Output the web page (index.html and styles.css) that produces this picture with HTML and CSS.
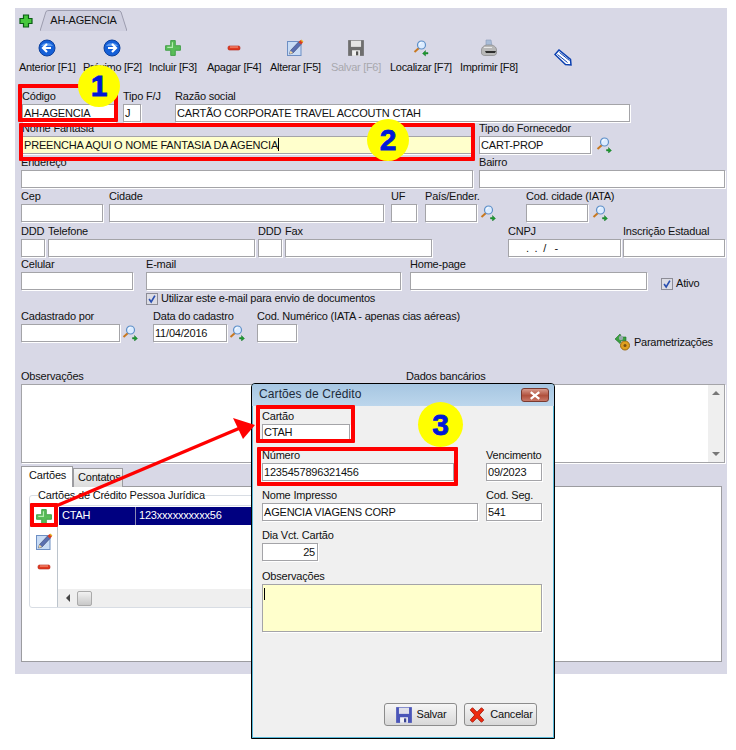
FILE: index.html
```html
<!DOCTYPE html>
<html lang="pt">
<head>
<meta charset="utf-8">
<title>Cadastro de Fornecedor</title>
<link rel="stylesheet" href="styles.css">
</head>
<body>
<svg class="defs" xmlns="http://www.w3.org/2000/svg">
  <symbol id="i-plus" viewBox="0 0 14 14">
    <path d="M5 .5h4v4.500h4.500v4H9v4.500H5V9H.5V5H5z" fill="#58bc58" stroke="#3f9e45" stroke-width=".8"/>
    <path d="M6.500 2v4.500H2" fill="none" stroke="#b4ecb0" stroke-width="1"/>
  </symbol>
  <symbol id="i-plus-bold" viewBox="0 0 14 14">
    <path d="M4.500 1h5v3.500h3.500v5H9.500V13h-5V9.500H1v-5h3.500z" fill="#46c83c" stroke="#0b5e16" stroke-width="1.200"/>
  </symbol>
  <symbol id="i-minus" viewBox="0 0 14 6">
    <rect x="1" y="1" width="12" height="4" rx="1.500" fill="#e03a20" stroke="#b32010" stroke-width=".6"/>
    <path d="M3 2h8" stroke="#f7a78e"/>
  </symbol>
  <symbol id="i-left" viewBox="0 0 18 18">
    <circle cx="9" cy="9" r="8" fill="#1560d8" stroke="#0c3f9c"/>
    <path d="M3 7a7 6 0 0 1 12 0" fill="#5f9cf0"/>
    <path d="M9 5L5 9l4 4M5.500 9H13" fill="none" stroke="#fff" stroke-width="2.200"/>
  </symbol>
  <symbol id="i-right" viewBox="0 0 18 18">
    <circle cx="9" cy="9" r="8" fill="#1560d8" stroke="#0c3f9c"/>
    <path d="M3 7a7 6 0 0 1 12 0" fill="#5f9cf0"/>
    <path d="M9 5l4 4-4 4M12.500 9H5" fill="none" stroke="#fff" stroke-width="2.200"/>
  </symbol>
  <symbol id="i-edit" viewBox="0 0 18 18">
    <rect x="1.500" y="2.500" width="13.500" height="14" fill="#c9dcf5" stroke="#6d8fc4"/>
    <path d="M3.500 15l1-3.500 8-8.500 2.500 2.500-8 8.500z" fill="#5a6fb0" stroke="#34406f" stroke-width=".6"/>
    <path d="M12.500 3L14.500 1l2.500 2.500-2 2z" fill="#d83a20"/>
    <path d="M15 1l2 2" stroke="#e8b020" stroke-width="1.200"/>
    <path d="M3.500 15l1-3.500 2.500 2.500z" fill="#f0d8a0"/>
  </symbol>
  <symbol id="i-disk-gray" viewBox="0 0 16 16">
    <path d="M1 1h14v14H1z" fill="#6e6e6e"/>
    <rect x="3.500" y="1.500" width="9" height="5.500" fill="#e4e4e4"/>
    <rect x="4.500" y="10" width="7" height="5" fill="#f0f0f0"/>
    <rect x="8" y="11" width="2" height="3.500" fill="#555"/>
  </symbol>
  <symbol id="i-disk-blue" viewBox="0 0 16 16">
    <path d="M1 1h14v14H1z" fill="#4a55b8"/>
    <rect x="3.500" y="1.500" width="9" height="5.500" fill="#dfe0ea"/>
    <rect x="4.500" y="10" width="7" height="5" fill="#f0f0f4"/>
    <rect x="8" y="11" width="2" height="3.500" fill="#3a448f"/>
  </symbol>
  <symbol id="i-lens" viewBox="0 0 16 16">
    <path d="M1.500 12L6 8" stroke="#c87820" stroke-width="2"/>
    <circle cx="8.500" cy="5" r="4" fill="#dcecff" stroke="#5f90c8" stroke-width="1.200"/>
    <path d="M6.500 4.500a2 2 0 0 1 2-2" stroke="#fff" fill="none"/>
    <path d="M10.500 12.500h2v-2l3 3-3 2.500v-2h-2z" fill="#1c9a30" stroke="#0d6a1c" stroke-width=".4"/>
  </symbol>
  <symbol id="i-find" viewBox="0 0 16 16">
    <path d="M1.500 12L6 8" stroke="#c87820" stroke-width="2"/>
    <circle cx="8.500" cy="5" r="4" fill="#dcecff" stroke="#5f90c8" stroke-width="1.200"/>
    <path d="M6.500 4.500a2 2 0 0 1 2-2" stroke="#fff" fill="none"/>
    <path d="M15 12.500h-2.500v-2l-3 3 3 2.500v-2H15z" fill="#1c9a30" stroke="#0d6a1c" stroke-width=".4"/>
  </symbol>
  <symbol id="i-print" viewBox="0 0 18 18">
    <path d="M6 1h5l1 6H6z" fill="#a9bdd8" stroke="#8a9cb8" stroke-width=".6"/>
    <path d="M1.500 11c0-3 3-5 6-5h3c3 0 6 2 6 5v3c0 1.500-1.500 2.500-3 2.500H4.500c-1.500 0-3-1-3-2.500z" fill="#b8b8b8" stroke="#7a7a7a" stroke-width=".6"/>
    <path d="M5 12h11l-1 2H6z" fill="#2e2e2e"/>
    <path d="M4 8.500h8" stroke="#e8e8e8"/>
  </symbol>
  <symbol id="i-clip" viewBox="0 0 18 18">
    <path d="M1 5.500L5 1l11.500 9.500.5 5.500-5.500-.5z" fill="#fff" stroke="#0a3fb0" stroke-width="1.500"/>
    <path d="M3.500 5.500l10 8M5.500 3.500l10 8" stroke="#0a3fb0" stroke-width="1"/>
  </symbol>
  <symbol id="i-gears" viewBox="0 0 18 18">
    <circle cx="11" cy="12.500" r="4.500" fill="#e0a020" stroke="#9a6a10"/>
    <circle cx="11" cy="12.500" r="1.500" fill="#7a5010"/>
    <path d="M1 6l5-5 1.500 3H12v3.500H7.500L6 10.500z" fill="#3aa040" stroke="#1e6e28" stroke-width=".6"/>
    <circle cx="7" cy="5" r="2.200" fill="#9aa8b0"/>
  </symbol>
  <symbol id="i-x" viewBox="0 0 16 16">
    <path d="M2 3.500L4 1.500l4 4 4-4 2 2-4 4.500 4 4.500-2 2-4-4-4 4-2-2 4-4.500z" fill="#ee2a10" stroke="#a81808" stroke-width=".8"/>
  </symbol>
  <symbol id="i-check" viewBox="0 0 12 12">
    <path d="M2.500 6l2.500 3.500L9.500 2" fill="none" stroke="#2a4fb0" stroke-width="2"/>
  </symbol>
</svg>

<main class="panel">
  <header class="tabstrip">
    <svg class="add-tab"><use href="#i-plus-bold"/></svg>
    <div class="doc-tab">
      <svg class="doc-tab-shape" viewBox="0 0 87 21" preserveAspectRatio="none"><path d="M0 21L6 1.500Q7 .500 9 .500H78Q80 .500 81 2L87 21" fill="#cfcfdf" stroke="#9c9cae"/></svg>
      <span class="doc-tab-label">AH-AGENCIA</span>
    </div>
  </header>

  <nav class="toolbar">
    <div class="tool"><svg class="ic18"><use href="#i-left"/></svg><span>Anterior [F1]</span></div>
    <div class="tool"><svg class="ic18"><use href="#i-right"/></svg><span>Próximo [F2]</span></div>
    <div class="tool"><svg class="ic16"><use href="#i-plus"/></svg><span>Incluir [F3]</span></div>
    <div class="tool"><svg class="ic-minus"><use href="#i-minus"/></svg><span>Apagar [F4]</span></div>
    <div class="tool"><svg class="ic18"><use href="#i-edit"/></svg><span>Alterar [F5]</span></div>
    <div class="tool tool-off"><svg class="ic18"><use href="#i-disk-gray"/></svg><span>Salvar [F6]</span></div>
    <div class="tool"><svg class="ic16"><use href="#i-find"/></svg><span>Localizar [F7]</span></div>
    <div class="tool"><svg class="ic18"><use href="#i-print"/></svg><span>Imprimir [F8]</span></div>
    <svg class="clip"><use href="#i-clip"/></svg>
  </nav>

  <section class="form">
    <div class="row">
      <div class="field w-codigo"><label>Código</label><div class="input">AH-AGENCIA</div></div>
      <div class="field w-tipo"><label>Tipo F/J</label><div class="input">J</div></div>
      <div class="field w-razao"><label>Razão social</label><div class="input">CARTÃO CORPORATE TRAVEL ACCOUTN CTAH</div></div>
    </div>
    <div class="row">
      <div class="field w-fantasia"><label>Nome Fantasia</label><div class="input input-yellow">PREENCHA AQUI O NOME FANTASIA DA AGENCIA<i class="caret"></i></div></div>
      <div class="field w-fornec"><label>Tipo do Fornecedor</label><div class="input">CART-PROP</div></div>
      <svg class="lens"><use href="#i-lens"/></svg>
    </div>
    <div class="row">
      <div class="field w-endereco"><label>Endereço</label><div class="input"></div></div>
      <div class="field w-bairro"><label>Bairro</label><div class="input"></div></div>
    </div>
    <div class="row">
      <div class="field w-cep"><label>Cep</label><div class="input"></div></div>
      <div class="field w-cidade"><label>Cidade</label><div class="input"></div></div>
      <div class="field w-uf"><label>UF</label><div class="input"></div></div>
      <div class="field w-pais"><label>País/Ender.</label><div class="input"></div></div>
      <svg class="lens lens-pais"><use href="#i-lens"/></svg>
      <div class="field w-codcid"><label>Cod. cidade (IATA)</label><div class="input"></div></div>
      <svg class="lens"><use href="#i-lens"/></svg>
    </div>
    <div class="row">
      <div class="field w-ddd"><label>DDD</label><div class="input"></div></div>
      <div class="field w-fone"><label>Telefone</label><div class="input"></div></div>
      <div class="field w-ddd2"><label>DDD</label><div class="input"></div></div>
      <div class="field w-fax"><label>Fax</label><div class="input"></div></div>
      <div class="field w-cnpj"><label>CNPJ</label><div class="input input-mask">. &nbsp;. &nbsp;/ &nbsp; -</div></div>
      <div class="field w-ie"><label>Inscrição Estadual</label><div class="input"></div></div>
    </div>
    <div class="row">
      <div class="field w-celular"><label>Celular</label><div class="input"></div></div>
      <div class="field w-email"><label>E-mail</label><div class="input"></div></div>
      <div class="field w-home"><label>Home-page</label><div class="input"></div></div>
      <div class="check check-ativo"><span class="box"><svg class="tick"><use href="#i-check"/></svg></span>Ativo</div>
    </div>
    <div class="row row-check">
      <div class="check"><span class="box"><svg class="tick"><use href="#i-check"/></svg></span>Utilizar este e-mail para envio de documentos</div>
    </div>
    <div class="row row-cad">
      <div class="field w-cadpor"><label>Cadastrado por</label><div class="input"></div></div>
      <svg class="lens lens-cad"><use href="#i-lens"/></svg>
      <div class="field w-data"><label>Data do cadastro</label><div class="input">11/04/2016</div></div>
      <svg class="lens lens-data"><use href="#i-lens"/></svg>
      <div class="field w-codnum"><label>Cod. Numérico (IATA - apenas cias aéreas)</label><div class="input"></div></div>
      <div class="param"><svg class="ic18"><use href="#i-gears"/></svg>Parametrizações</div>
    </div>
    <div class="row row-memo">
      <div class="field w-obs"><label>Observações</label><div class="input memo"></div></div>
      <div class="field w-banco"><label>Dados bancários</label>
        <div class="input memo memo-scroll"><div class="vscroll"><b class="up"></b><b class="down"></b></div></div>
      </div>
    </div>
  </section>

  <section class="tabs">
    <div class="tab-heads">
      <div class="tab tab-on">Cartões</div>
      <div class="tab">Contatos</div>
    </div>
    <div class="tab-page">
      <fieldset class="group">
        <legend>Cartões de Crédito Pessoa Jurídica</legend>
        <div class="side">
          <svg class="ic16"><use href="#i-plus"/></svg>
          <svg class="ic18 side-edit"><use href="#i-edit"/></svg>
          <svg class="ic-minus side-minus"><use href="#i-minus"/></svg>
        </div>
        <div class="grid">
          <div class="grid-row"><span class="cell-a">CTAH</span><span>123xxxxxxxxxx56</span></div>
          <div class="hscroll"><b class="left"></b><b class="thumb"></b></div>
        </div>
      </fieldset>
    </div>
  </section>
</main>

<aside class="dialog">
  <div class="titlebar"><span>Cartões de Crédito</span><span class="close"><svg class="close-x" viewBox="0 0 14 10"><path d="M2 1l10 8M12 1L2 9" stroke="#fff" stroke-width="2.600"/></svg></span></div>
  <div class="dlg-body">
    <div class="dlg-row dlg-r1"><div class="field d-cartao"><label>Cartão</label><div class="input d-h16">CTAH</div></div></div>
    <div class="dlg-row dlg-r2">
      <div class="field d-numero"><label>Número</label><div class="input">1235457896321456</div></div>
      <div class="field d-venc"><label>Vencimento</label><div class="input">09/2023</div></div>
    </div>
    <div class="dlg-row dlg-r3">
      <div class="field d-nome"><label>Nome Impresso</label><div class="input">AGENCIA VIAGENS CORP</div></div>
      <div class="field d-seg"><label>Cod. Seg.</label><div class="input">541</div></div>
    </div>
    <div class="dlg-row dlg-r4"><div class="field d-dia"><label>Dia Vct. Cartão</label><div class="input input-right">25</div></div></div>
    <div class="dlg-row dlg-r5"><div class="field d-obs"><label>Observações</label><div class="input input-yellow d-memo"><i class="caret caret-tall"></i></div></div></div>
    <div class="dlg-buttons">
      <div class="btn"><svg class="ic18"><use href="#i-disk-blue"/></svg>Salvar</div>
      <div class="btn"><svg class="ic18"><use href="#i-x"/></svg>Cancelar</div>
    </div>
  </div>
</aside>

<div class="mark mark-codigo"></div>
<div class="mark mark-fantasia"></div>
<div class="mark mark-plus"></div>
<div class="mark mark-cartao"></div>
<div class="mark mark-numero"></div>
<div class="badge badge-1">1</div>
<div class="badge badge-2">2</div>
<div class="badge badge-3">3</div>
<svg class="arrow" viewBox="0 0 736 750"><path d="M56 506L240 428" stroke="#f00" stroke-width="3.500"/><path d="M255 425L233 418L243 439z" fill="#f00"/></svg>
</body>
</html>
```

FILE: styles.css
```css
* { box-sizing: border-box; }

html, body { margin: 0; background: #fff; }

body {
  position: relative;
  width: 736px;
  height: 750px;
  overflow: hidden;
  font: 11px/13px "Liberation Sans", Arial, sans-serif;
  letter-spacing: -.2px;
  color: #111;
}

.defs { display: none; }

svg { display: block; flex: none; }

.panel {
  margin: 8px 0 0 15px;
  width: 712px;
  height: 666px;
  background: #d8d8e6;
  padding: 0 0 0 6px;
  display: flex;
  flex-direction: column;
}

.tabstrip { display: flex; height: 23px; padding-top: 2px; flex: none; }

.add-tab { width: 14px; height: 14px; margin: 4px 0 0 -2px; }

.doc-tab {
  position: relative;
  width: 87px;
  height: 21px;
  margin-left: 7px;
  display: flex;
  align-items: center;
  justify-content: center;
}

.doc-tab-shape { position: absolute; inset: 0; width: 100%; height: 100%; }

.doc-tab-label { position: relative; }

.toolbar {
  margin: 7px 0 0 -2px;
  height: 38px;
  display: grid;
  grid-template-columns: 64px 66px 58px 63px 61px 59px 70px 94px auto;
  justify-items: start;
  letter-spacing: -.3px;
  flex: none;
}

.tool { display: inline-flex; flex-direction: column; align-items: center; white-space: nowrap; }

.tool svg { height: 20px; }

.tool span { margin-top: 3px; }

.tool-off { color: #a8a8ae; }

.ic18 { width: 18px; height: 18px; }

.ic16 { width: 16px; height: 16px; }

.ic-minus { width: 14px; height: 6px; }

.clip { width: 18px; height: 18px; margin-top: 11px; }

.form {
  margin-top: 14px;
  display: grid;
  grid-template-rows: 32px 34px 34px 35px 33px 29px 23px 60px 94px;
  height: 374px;
  flex: none;
}

.row { display: flex; align-items: flex-start; }

.field { display: flex; flex-direction: column; flex: none; }

.field label { height: 14px; white-space: nowrap; }

.input {
  height: 18px;
  border: 1px solid #a4a4a8;
  box-shadow: 1px 1px 0 #fff;
  background: #fff;
  padding: 1px 1px 0 1px;
  white-space: nowrap;
  overflow: hidden;
  line-height: 15px;
}

.input-yellow { background: #ffffcc; }

.input-right { text-align: right; padding-right: 2px; }

.input-mask { padding-left: 17px; }

.caret { display: inline-block; width: 1px; height: 13px; background: #000; vertical-align: -2px; }

.caret-tall { display: block; height: 12px; margin-top: 2px; }

.w-codigo { width: 93px; margin-left: 1px; margin-right: 8px; }
.w-tipo { width: 18px; margin-right: 34px; }
.w-razao { width: 455px; }
.w-fantasia { width: 451px; margin-left: 1px; margin-right: 6px; }
.w-fornec { width: 112px; margin-right: 5px; }
.w-endereco { width: 452px; margin-right: 6px; }
.w-bairro { width: 246px; }
.w-cep { width: 82px; margin-right: 6px; }
.w-cidade { width: 275px; margin-right: 7px; }
.w-uf { width: 26px; margin-right: 8px; }
.w-pais { width: 52px; margin-right: 3px; }
.w-codcid { width: 62px; margin-right: 4px; }
.w-ddd { width: 24px; margin-right: 3px; }
.w-fone { width: 207px; margin-right: 3px; }
.w-ddd2 { width: 24px; margin-right: 3px; }
.w-fax { width: 147px; margin-right: 76px; }
.w-cnpj { width: 113px; margin-right: 2px; }
.w-ie { width: 102px; }
.w-celular { width: 112px; margin-right: 13px; }
.w-email { width: 255px; margin-right: 9px; }
.w-home { width: 237px; margin-right: 14px; }
.w-cadpor { width: 99px; margin-right: 2px; }
.w-data { width: 74px; margin-right: 2px; }
.w-codnum { width: 40px; }
.w-obs { width: 385px; }
.w-banco { width: 319px; }

.lens { width: 16px; height: 16px; margin-top: 15px; }
.lens-pais { margin-right: 30px; }
.lens-cad { margin-right: 15px; }
.lens-data { margin-right: 12px; }

.check { display: flex; align-items: center; gap: 3px; white-space: nowrap; }

.box {
  width: 12px;
  height: 12px;
  border: 1px solid #8c8c96;
  background: #dcdce4;
  display: block;
}

.tick { width: 10px; height: 10px; }

.check-ativo { margin-top: 19px; }

.row-check { padding-left: 125px; padding-top: 5px; }

.param { display: flex; align-items: center; gap: 2px; margin: 23px 0 0 317px; white-space: nowrap; letter-spacing: -.25px; }

.row-memo { align-items: flex-start; }

.memo { height: 79px; }

.memo-scroll { position: relative; padding: 0; display: flex; justify-content: flex-end; }

.vscroll { width: 16px; background: #efefef; height: 100%; position: relative; }

.vscroll b { position: absolute; left: 4px; width: 0; height: 0; border: 4px solid transparent; }

.vscroll .up { top: 2px; border-bottom-color: #777; }

.vscroll .down { bottom: 2px; border-top-color: #777; }

.tabs { margin-top: 2px; width: 701px; flex: none; }

.tab-heads { display: flex; height: 20px; align-items: flex-start; }

.tab {
  width: 50px;
  height: 19px;
  margin-top: 2px;
  border: 1px solid #9c9ca0;
  border-bottom: 0;
  background: linear-gradient(#f4f4f4, #dcdcdc);
  padding: 2px 0 0 4px;
}

.tab-on {
  width: 52px;
  height: 21px;
  margin-top: 0;
  background: #fff;
  padding: 2px 0 0 7px;
  position: relative;
}

.tab-page {
  height: 176px;
  background: #fff;
  border: 1px solid #9c9ca0;
  padding: 2px 0 0 7px;
}

.group {
  margin: 0;
  padding: 0;
  width: 510px;
  height: 119px;
  border: 1px solid #d8dde4;
  border-radius: 3px;
  display: flex;
  min-width: 0;
}

.group legend { padding: 0; margin-left: 8px; line-height: 13px; background: #fff; }

.side {
  width: 27px;
  flex: none;
  display: flex;
  flex-direction: column;
  align-items: center;
  padding-top: 7px;
}

.side-edit { margin-top: 8px; }

.side-minus { margin-top: 13px; }

.grid {
  margin-top: 3px;
  flex: 1;
  height: 102px;
  border-left: 1px solid #bcc4cc;
  border-top: 1px solid #d8dde4;
  padding-top: 1px;
  display: flex;
  flex-direction: column;
  justify-content: space-between;
}

.grid-row {
  height: 18px;
  background: #000080;
  color: #fff;
  display: flex;
  line-height: 17px;
  margin-left: 1px;
}

.cell-a { width: 77px; padding-left: 3px; border-right: 1px solid #8a8ab4; margin-right: 3px; }

.hscroll { height: 18px; background: #efefef; position: relative; }

.hscroll .left { position: absolute; left: 8px; top: 5px; border: 4px solid transparent; border-right-color: #444; width: 0; height: 0; margin-left: -4px; }

.hscroll .thumb { position: absolute; left: 19px; top: 2px; width: 15px; height: 15px; border: 1px solid #aaa; border-radius: 2px; background: linear-gradient(#f2f2f2, #c8c8c8); }

.dialog {
  position: absolute;
  left: 251px;
  top: 383px;
  width: 304px;
  height: 356px;
  border: 1px solid #000;
  border-radius: 4px 4px 0 0;
  background: #58b8d8;
  padding: 0 1px 1px 1px;
  display: flex;
  flex-direction: column;
  z-index: 2;
}

.titlebar {
  height: 22px;
  flex: none;
  margin: 0 -1px;
  padding: 4px 5px 0 7px;
  border-radius: 3px 3px 0 0;
  background: linear-gradient(#a6c6e2, #bcd6ec);
  color: #1c2a3a;
  display: flex;
  justify-content: space-between;
  font-size: 12px;
  letter-spacing: .1px;
}

.close {
  width: 28px;
  height: 14px;
  border: 1px solid #7a3a30;
  border-radius: 3px;
  background: linear-gradient(#d89a8c, #b0503c 55%, #c87868);
  display: flex;
  align-items: center;
  justify-content: center;
}

.close-x { width: 12px; height: 9px; }

.dlg-body {
  flex: 1;
  background: #f0f0f0;
  padding: 0 0 0 9px;
  display: flex;
  flex-direction: column;
}

.dlg-row { display: flex; gap: 8px; flex: none; }

.dlg-r1 { margin-top: 4px; }
.dlg-r2 { margin-top: 9px; }
.dlg-r3 { margin-top: 8px; }
.dlg-r4 { margin-top: 8px; }
.dlg-r5 { margin-top: 9px; }

.d-cartao { width: 88px; }
.d-h16 { height: 16px; line-height: 13px; }
.d-numero { width: 192px; margin-right: 24px; }
.d-venc { width: 56px; }
.d-nome { width: 216px; }
.d-seg { width: 56px; }
.d-dia { width: 56px; }
.d-obs { width: 280px; }
.d-memo { height: 48px; }

.dlg-buttons {
  margin-top: auto;
  margin-bottom: 11px;
  padding-left: 122px;
  display: flex;
  gap: 7px;
}

.btn {
  width: 73px;
  height: 23px;
  border: 1px solid #8c8c8c;
  border-radius: 3px;
  background: linear-gradient(#f6f6f6, #d8d8d8);
  display: flex;
  align-items: center;
  justify-content: center;
  gap: 4px;
}

.mark { position: absolute; border: 4px solid #f00; border-radius: 1px; z-index: 3; }
.mark-codigo { left: 18px; top: 84px; width: 100px; height: 38px; }
.mark-fantasia { left: 19px; top: 123px; width: 456px; height: 38px; }
.mark-plus { left: 30px; top: 503px; width: 28px; height: 24px; }
.mark-cartao { left: 256px; top: 405px; width: 99px; height: 38px; }
.mark-numero { left: 257px; top: 447px; width: 201px; height: 39px; }

.badge {
  position: absolute;
  z-index: 4;
  border-radius: 50%;
  background: #ffff00;
  color: #0018d8;
  font: bold 30px/42px "Liberation Sans", Arial, sans-serif;
  letter-spacing: 0;
  text-align: center;
  -webkit-text-stroke: .8px #0018d8;
}
.badge-1 { left: 78px; top: 65px; width: 42px; height: 42px; }
.badge-2 { left: 367px; top: 119px; width: 42px; height: 42px; }
.badge-3 { left: 418px; top: 402px; width: 45px; height: 45px; line-height: 45px; }

.arrow { position: absolute; left: 0; top: 0; width: 736px; height: 750px; z-index: 3; pointer-events: none; }
```
